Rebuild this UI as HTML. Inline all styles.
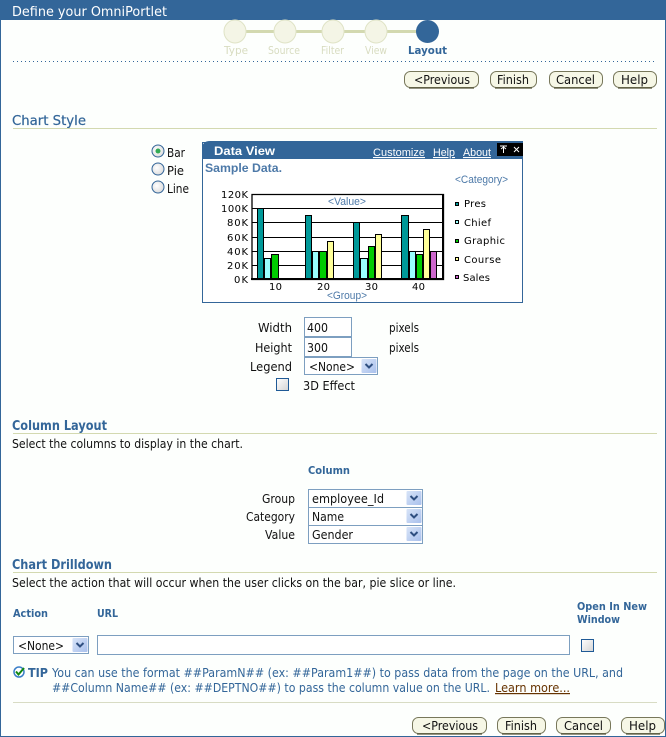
<!DOCTYPE html>
<html><head><meta charset="utf-8"><title>Define your OmniPortlet</title>
<style>
html,body{margin:0;padding:0;background:#fdfffd;}
svg{display:block;font-family:"DejaVu Sans","Liberation Sans",sans-serif;}
.t{font-size:12px;fill:#111;}
.h{font-size:13px;font-weight:bold;fill:#336699;}
.b{font-size:11px;font-weight:bold;fill:#336699;}
.tip{font-size:12px;fill:#336699;}
.tr{font-size:11px;fill:#d8dcc0;}
.a{font-family:"Liberation Sans",sans-serif;font-size:11px;fill:#4d79a8;}
.l{font-family:"Liberation Sans",sans-serif;font-size:11px;fill:#fff;text-decoration:underline;}
.ax{font-size:10px;fill:#000;}
.btn{font-size:12px;fill:#111;}
</style></head><body>
<svg width="666" height="737" viewBox="0 0 666 737" xmlns="http://www.w3.org/2000/svg">
<defs>
<linearGradient id="ar" x1="0" y1="0" x2="1" y2="1"><stop offset="0" stop-color="#d8e4f8"/><stop offset="1" stop-color="#a9c0ec"/></linearGradient>
<linearGradient id="cb" x1="0" y1="0" x2="1" y2="1"><stop offset="0" stop-color="#fff"/><stop offset="1" stop-color="#d4d4d4"/></linearGradient>
<radialGradient id="rd" cx=".4" cy=".4" r=".7"><stop offset="0" stop-color="#fff"/><stop offset="1" stop-color="#d8d8d8"/></radialGradient>
<g id="arrow"><rect width="15" height="14" rx="1" fill="url(#ar)"/><path d="M4 5l3.5 3.5L11 5" fill="none" stroke="#2f4f80" stroke-width="2"/></g>
</defs>
<rect width="666" height="737" fill="#fdfffd"/>
<rect x="0" y="0" width="1" height="737" fill="#336699"/><rect x="665" y="0" width="1" height="737" fill="#336699"/><rect x="0" y="736" width="666" height="1" fill="#336699"/>
<rect width="666" height="20" fill="#336699"/>
<text x="12" y="16" textLength="155" lengthAdjust="spacingAndGlyphs" font-size="13" fill="#fff">Define your OmniPortlet</text>

<!-- train -->
<rect x="235" y="30" width="192" height="3" fill="#d3d9b0"/>
<g fill="#f4f5e6" stroke="#dfe3c6"><ellipse cx="235" cy="31.500" rx="11" ry="11.500"/><ellipse cx="285" cy="31.500" rx="11" ry="11.500"/><ellipse cx="333" cy="31.500" rx="11" ry="11.500"/><ellipse cx="376" cy="31.500" rx="11" ry="11.500"/></g>
<ellipse cx="427.500" cy="31.500" rx="11.500" ry="11.500" fill="#336699"/>
<text class="tr" x="224" y="54" textLength="24" lengthAdjust="spacingAndGlyphs">Type</text>
<text class="tr" x="268" y="54" textLength="32" lengthAdjust="spacingAndGlyphs">Source</text>
<text class="tr" x="321" y="54" textLength="23" lengthAdjust="spacingAndGlyphs">Filter</text>
<text class="tr" x="365" y="54" textLength="22" lengthAdjust="spacingAndGlyphs">View</text>
<text class="b" x="408" y="54" textLength="39" lengthAdjust="spacingAndGlyphs">Layout</text>
<line x1="13" y1="61.500" x2="657" y2="61.500" stroke="#336699" stroke-dasharray="1 3"/>

<!-- top buttons -->
<g fill="#f6f7e6" stroke="#77775a"><rect x="404.500" y="71.500" width="74" height="16" rx="6"/><rect x="490.500" y="71.500" width="46" height="16" rx="6"/><rect x="549.500" y="71.500" width="53" height="16" rx="6"/><rect x="613.500" y="71.500" width="43" height="16" rx="6"/></g>
<g stroke="#55553a" stroke-width="1.300" fill="none"><path d="M409 88h65"/><path d="M495 88h37"/><path d="M554 88h44"/><path d="M618 88h34"/></g>
<text class="btn" x="414" y="84" textLength="56" lengthAdjust="spacingAndGlyphs">&lt;Previous</text>
<text class="btn" x="497" y="84" textLength="32" lengthAdjust="spacingAndGlyphs">Finish</text>
<text class="btn" x="556" y="84" textLength="39" lengthAdjust="spacingAndGlyphs">Cancel</text>
<text class="btn" x="621" y="84" textLength="27" lengthAdjust="spacingAndGlyphs">Help</text>

<!-- Chart Style -->
<text x="12" y="125" textLength="74" lengthAdjust="spacingAndGlyphs" font-size="13" fill="#336699" stroke="#336699" stroke-width=".2">Chart Style</text>
<rect x="13" y="128" width="644" height="1" fill="#d3d9b0"/>
<g fill="url(#rd)" stroke="#336699"><circle cx="158" cy="151" r="6"/><circle cx="158" cy="169" r="6"/><circle cx="158" cy="187" r="6"/></g>
<circle cx="158" cy="151" r="2.500" fill="#33aa55"/>
<text class="t" x="167" y="157" textLength="18" lengthAdjust="spacingAndGlyphs">Bar</text>
<text class="t" x="167" y="175" textLength="17" lengthAdjust="spacingAndGlyphs">Pie</text>
<text class="t" x="167" y="193" textLength="22" lengthAdjust="spacingAndGlyphs">Line</text>

<!-- Chart panel -->
<rect x="202.500" y="142.500" width="320" height="160" fill="#fff" stroke="#336699"/>
<path d="M202 159v-10q0-8 8-8h313v18z" fill="#336699"/>
<text x="214" y="155" textLength="61" lengthAdjust="spacingAndGlyphs" font-family="Liberation Sans" font-size="12" font-weight="bold" fill="#fff">Data View</text>
<text class="l" x="373" y="156" textLength="52" lengthAdjust="spacingAndGlyphs">Customize</text>
<text class="l" x="433" y="156" textLength="22" lengthAdjust="spacingAndGlyphs">Help</text>
<text class="l" x="463" y="156" textLength="28" lengthAdjust="spacingAndGlyphs">About</text>
<rect x="497" y="143" width="26" height="13" fill="#000"/>
<path d="M500 146h7M503.500 146v7M501 149l2.500-2 2.500 2M514 147l5 5M519 147l-5 5" stroke="#fff" fill="none"/>
<text x="205" y="172" textLength="77" lengthAdjust="spacingAndGlyphs" font-family="Liberation Sans" font-size="12" font-weight="bold" fill="#4d79a8">Sample Data.</text>
<text class="a" x="455" y="183" textLength="53" lengthAdjust="spacingAndGlyphs">&lt;Category&gt;</text>

<!-- plot -->
<g stroke="#000"><path d="M252 208.500h191M252 222.500h191M252 237.500h191M252 251.500h191M252 265.500h191"/></g>
<g stroke="#000" fill="#009999">
<rect x="257.500" y="208.500" width="6" height="70"/><rect x="305.500" y="215.500" width="6" height="63"/><rect x="353.500" y="222.500" width="6" height="56"/><rect x="401.500" y="215.500" width="7" height="63"/></g>
<g stroke="#000" fill="#99ffff">
<rect x="264.500" y="258.500" width="6" height="20"/><rect x="312.500" y="251.500" width="6" height="27"/><rect x="360.500" y="258.500" width="7" height="20"/><rect x="409.500" y="251.500" width="6" height="27"/></g>
<g stroke="#000" fill="#00cc00">
<rect x="271.500" y="254.500" width="7" height="24"/><rect x="319.500" y="251.500" width="7" height="27"/><rect x="368.500" y="246.500" width="6" height="32"/><rect x="416.500" y="254.500" width="6" height="24"/></g>
<g stroke="#000" fill="#ffff99">
<rect x="327.500" y="241.500" width="6" height="37"/><rect x="375.500" y="234.500" width="6" height="44"/><rect x="423.500" y="229.500" width="6" height="49"/></g>
<rect x="430.500" y="251.500" width="6" height="27" fill="#cc66cc" stroke="#000"/>
<path d="M252 194.500h191.500v85h-191.500z" fill="none" stroke="#000" stroke-width="1.300"/>
<rect x="442" y="194" width="2" height="86" fill="#000"/><rect x="251" y="278" width="193" height="2" fill="#000"/>
<text class="a" x="328" y="205" textLength="38" lengthAdjust="spacingAndGlyphs">&lt;Value&gt;</text>
<text class="a" x="327" y="299" textLength="40" lengthAdjust="spacingAndGlyphs">&lt;Group&gt;</text>
<g class="ax">
<text class="ax" x="221" y="198" textLength="27">120K</text>
<text class="ax" x="221" y="212" textLength="27">100K</text>
<text class="ax" x="227" y="226" textLength="21">80K</text>
<text class="ax" x="227" y="241" textLength="21">60K</text>
<text class="ax" x="227" y="255" textLength="21">40K</text>
<text class="ax" x="227" y="269" textLength="21">20K</text>
<text class="ax" x="234" y="283" textLength="14">0K</text>
<text class="ax" x="269" y="290" textLength="13">10</text>
<text class="ax" x="317" y="290" textLength="13">20</text>
<text class="ax" x="365" y="290" textLength="13">30</text>
<text class="ax" x="412" y="290" textLength="13">40</text>
<text class="ax" x="464" y="207" textLength="22">Pres</text>
<text class="ax" x="464" y="226" textLength="27">Chief</text>
<text class="ax" x="464" y="244" textLength="41">Graphic</text>
<text class="ax" x="464" y="263" textLength="37">Course</text>
<text class="ax" x="463" y="281" textLength="27">Sales</text>
</g>
<g stroke="#000"><rect x="455.500" y="202.500" width="3" height="3" fill="#009999"/><rect x="455.500" y="220.500" width="3" height="3" fill="#99ffff"/><rect x="455.500" y="239.500" width="3" height="3" fill="#00cc00"/><rect x="455.500" y="257.500" width="3" height="3" fill="#ffff99"/><rect x="455.500" y="275.500" width="3" height="3" fill="#cc66cc"/></g>

<!-- size form -->
<text class="t" x="258" y="332" textLength="34" lengthAdjust="spacingAndGlyphs">Width</text>
<text class="t" x="255" y="352" textLength="37" lengthAdjust="spacingAndGlyphs">Height</text>
<text class="t" x="250" y="371" textLength="42" lengthAdjust="spacingAndGlyphs">Legend</text>
<g fill="#fff" stroke="#7d9fc0"><rect x="304.500" y="317.500" width="47" height="19"/><rect x="304.500" y="337.500" width="47" height="19"/><rect x="304.500" y="357.500" width="73" height="17"/></g>
<text class="t" x="307" y="332" textLength="21" lengthAdjust="spacingAndGlyphs">400</text>
<text class="t" x="307" y="352" textLength="21" lengthAdjust="spacingAndGlyphs">300</text>
<text class="t" x="309" y="371" textLength="46" lengthAdjust="spacingAndGlyphs">&lt;None&gt;</text>
<use href="#arrow" x="361.500" y="359"/>
<text class="t" x="389" y="332" textLength="30" lengthAdjust="spacingAndGlyphs">pixels</text>
<text class="t" x="389" y="352" textLength="30" lengthAdjust="spacingAndGlyphs">pixels</text>
<rect x="276.500" y="378.500" width="12" height="12" fill="url(#cb)" stroke="#1f5a96"/>
<text class="t" x="303" y="390" textLength="52" lengthAdjust="spacingAndGlyphs">3D Effect</text>

<!-- Column Layout -->
<text class="h" x="12" y="430" textLength="95" lengthAdjust="spacingAndGlyphs">Column Layout</text>
<rect x="13" y="433" width="644" height="1" fill="#d3d9b0"/>
<text class="t" x="12" y="448" textLength="231" lengthAdjust="spacingAndGlyphs">Select the columns to display in the chart.</text>
<text class="b" x="308" y="474" textLength="42" lengthAdjust="spacingAndGlyphs">Column</text>
<text class="t" x="262" y="503" textLength="33" lengthAdjust="spacingAndGlyphs">Group</text>
<text class="t" x="246" y="521" textLength="49" lengthAdjust="spacingAndGlyphs">Category</text>
<text class="t" x="265" y="539" textLength="30" lengthAdjust="spacingAndGlyphs">Value</text>
<g fill="#fff" stroke="#7d9fc0"><rect x="308.500" y="489.500" width="114" height="18"/><rect x="308.500" y="507.500" width="114" height="18"/><rect x="308.500" y="525.500" width="114" height="18"/></g>
<text class="t" x="312" y="503" textLength="72" lengthAdjust="spacingAndGlyphs">employee_Id</text>
<text class="t" x="312" y="521" textLength="32" lengthAdjust="spacingAndGlyphs">Name</text>
<text class="t" x="312" y="539" textLength="41" lengthAdjust="spacingAndGlyphs">Gender</text>
<use href="#arrow" x="406.500" y="491"/><use href="#arrow" x="406.500" y="509"/><use href="#arrow" x="406.500" y="527"/>

<!-- Chart Drilldown -->
<text class="h" x="12" y="569" textLength="100" lengthAdjust="spacingAndGlyphs">Chart Drilldown</text>
<rect x="13" y="572" width="644" height="1" fill="#d3d9b0"/>
<text class="t" x="12" y="587" textLength="444" lengthAdjust="spacingAndGlyphs">Select the action that will occur when the user clicks on the bar, pie slice or line.</text>
<text class="b" x="13" y="617" textLength="35" lengthAdjust="spacingAndGlyphs">Action</text>
<text class="b" x="97" y="617" textLength="21" lengthAdjust="spacingAndGlyphs">URL</text>
<text class="b" x="577" y="610" textLength="70" lengthAdjust="spacingAndGlyphs">Open In New</text>
<text class="b" x="577" y="623" textLength="43" lengthAdjust="spacingAndGlyphs">Window</text>
<rect x="13.500" y="636.500" width="75" height="17" fill="#fff" stroke="#7d9fc0"/>
<text class="t" x="18" y="650" textLength="46" lengthAdjust="spacingAndGlyphs">&lt;None&gt;</text>
<use href="#arrow" x="72.500" y="638"/>
<rect x="97.500" y="635.500" width="472" height="19" fill="#fff" stroke="#7d9fc0"/>
<rect x="581.500" y="639.500" width="12" height="12" fill="url(#cb)" stroke="#1f5a96"/>

<!-- Tip -->
<circle cx="19" cy="672" r="5" fill="#fff" stroke="#3a7fc8" stroke-width="1.500"/>
<path d="M16 671.500l2.500 3L24 668" fill="none" stroke="#118811" stroke-width="2"/>
<text x="28" y="677" textLength="20" lengthAdjust="spacingAndGlyphs" font-size="12" font-weight="bold" fill="#336699">TIP</text>
<text class="tip" x="52" y="677" textLength="571" lengthAdjust="spacingAndGlyphs">You can use the format ##ParamN## (ex: ##Param1##) to pass data from the page on the URL, and</text>
<text class="tip" x="52" y="692" textLength="438" lengthAdjust="spacingAndGlyphs">##Column Name## (ex: ##DEPTNO##) to pass the column value on the URL.</text>
<text x="495" y="692" textLength="75" lengthAdjust="spacingAndGlyphs" font-size="12" fill="#663300" text-decoration="underline">Learn more...</text>
<rect x="13" y="702" width="644" height="1" fill="#d8dcc4"/>

<!-- bottom buttons -->
<g fill="#f6f7e6" stroke="#77775a"><rect x="412.500" y="717.500" width="74" height="16" rx="6"/><rect x="497.500" y="717.500" width="48" height="16" rx="6"/><rect x="556.500" y="717.500" width="54" height="16" rx="6"/><rect x="621.500" y="717.500" width="43" height="16" rx="6"/></g>
<g stroke="#55553a" stroke-width="1.300" fill="none"><path d="M417 734h65"/><path d="M502 734h39"/><path d="M561 734h45"/><path d="M626 734h34"/></g>
<text class="btn" x="422" y="730" textLength="56" lengthAdjust="spacingAndGlyphs">&lt;Previous</text>
<text class="btn" x="505" y="730" textLength="32" lengthAdjust="spacingAndGlyphs">Finish</text>
<text class="btn" x="564" y="730" textLength="39" lengthAdjust="spacingAndGlyphs">Cancel</text>
<text class="btn" x="629" y="730" textLength="27" lengthAdjust="spacingAndGlyphs">Help</text>
</svg>
</body></html>
